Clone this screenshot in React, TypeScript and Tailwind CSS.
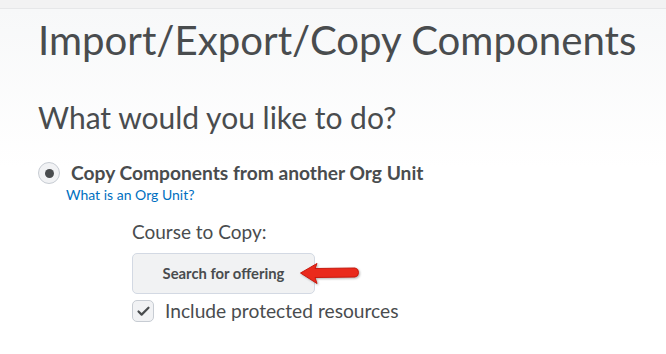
import { Check } from 'lucide-react'

const RedArrow = () => (
  <svg width="62" height="24" viewBox="0 0 62 24" className="drop-shadow-[1px_1px_1px_rgba(0,0,0,0.3)]">
    <path
      d="M1.5 11 L18 1.5 L16 6.5 L56 6 Q59.5 6.5 59.5 10.5 Q59.5 14.5 56 15 L16 15.5 L18 21.5 Z"
      fill="#ea2a1c"
      stroke="#c8190e"
      strokeWidth="1"
      strokeLinejoin="round"
    />
  </svg>
)

export default function App() {
  return (
    <div className="w-[666px] h-[354px] overflow-hidden bg-white font-['Lato',sans-serif] text-[#494c4e]">
      <div className="h-[9px] bg-[#f2f2f3] border-b border-[#e6e7e9]" />
      <div className="bg-gradient-to-b from-[#f7f8f9] to-white to-[45%] h-full px-[38px] pt-[7px]">
        <h1 className="text-[40.2px] leading-[48px] whitespace-nowrap">Import/Export/Copy Components</h1>

        <h2 className="mt-[35px] text-[30px] leading-[36px] whitespace-nowrap">What would you like to do?</h2>

        <div className="mt-[27px] flex items-center gap-[11px]">
          <span className="w-[22px] h-[22px] rounded-full border border-[#c7ccd3] bg-[#f1f2f4] flex items-center justify-center">
            <span className="w-[9px] h-[9px] rounded-full bg-[#494c4e]" />
          </span>
          <span className="text-[19.2px] font-bold leading-[22px] whitespace-nowrap">Copy Components from another Org Unit</span>
        </div>
        <a className="block ml-[28px] mt-[3px] text-[14px] leading-[16px] text-[#006fbf]">What is an Org Unit?</a>

        <div className="ml-[94px] mt-[18px]">
          <div className="text-[19px] leading-[22px]">Course to Copy:</div>
          <div className="mt-[10px] flex items-center">
            <button className="w-[183px] h-[41px] rounded-[5px] border border-[#d3d9e3] bg-[#f1f2f3] text-[14.8px] font-bold text-[#494c4e]">
              Search for offering
            </button>
            <div className="-ml-[16px] mt-[1px]">
              <RedArrow />
            </div>
          </div>
          <div className="mt-[6px] flex items-center gap-[11px]">
            <span className="w-[22px] h-[22px] rounded-[5px] border border-[#c7ccd3] bg-[#f1f2f4] flex items-center justify-center">
              <Check className="w-[15px] h-[15px] text-[#494c4e]" strokeWidth={3.5} />
            </span>
            <span className="text-[19.2px] leading-[22px] whitespace-nowrap">Include protected resources</span>
          </div>
        </div>
      </div>
    </div>
  )
}
